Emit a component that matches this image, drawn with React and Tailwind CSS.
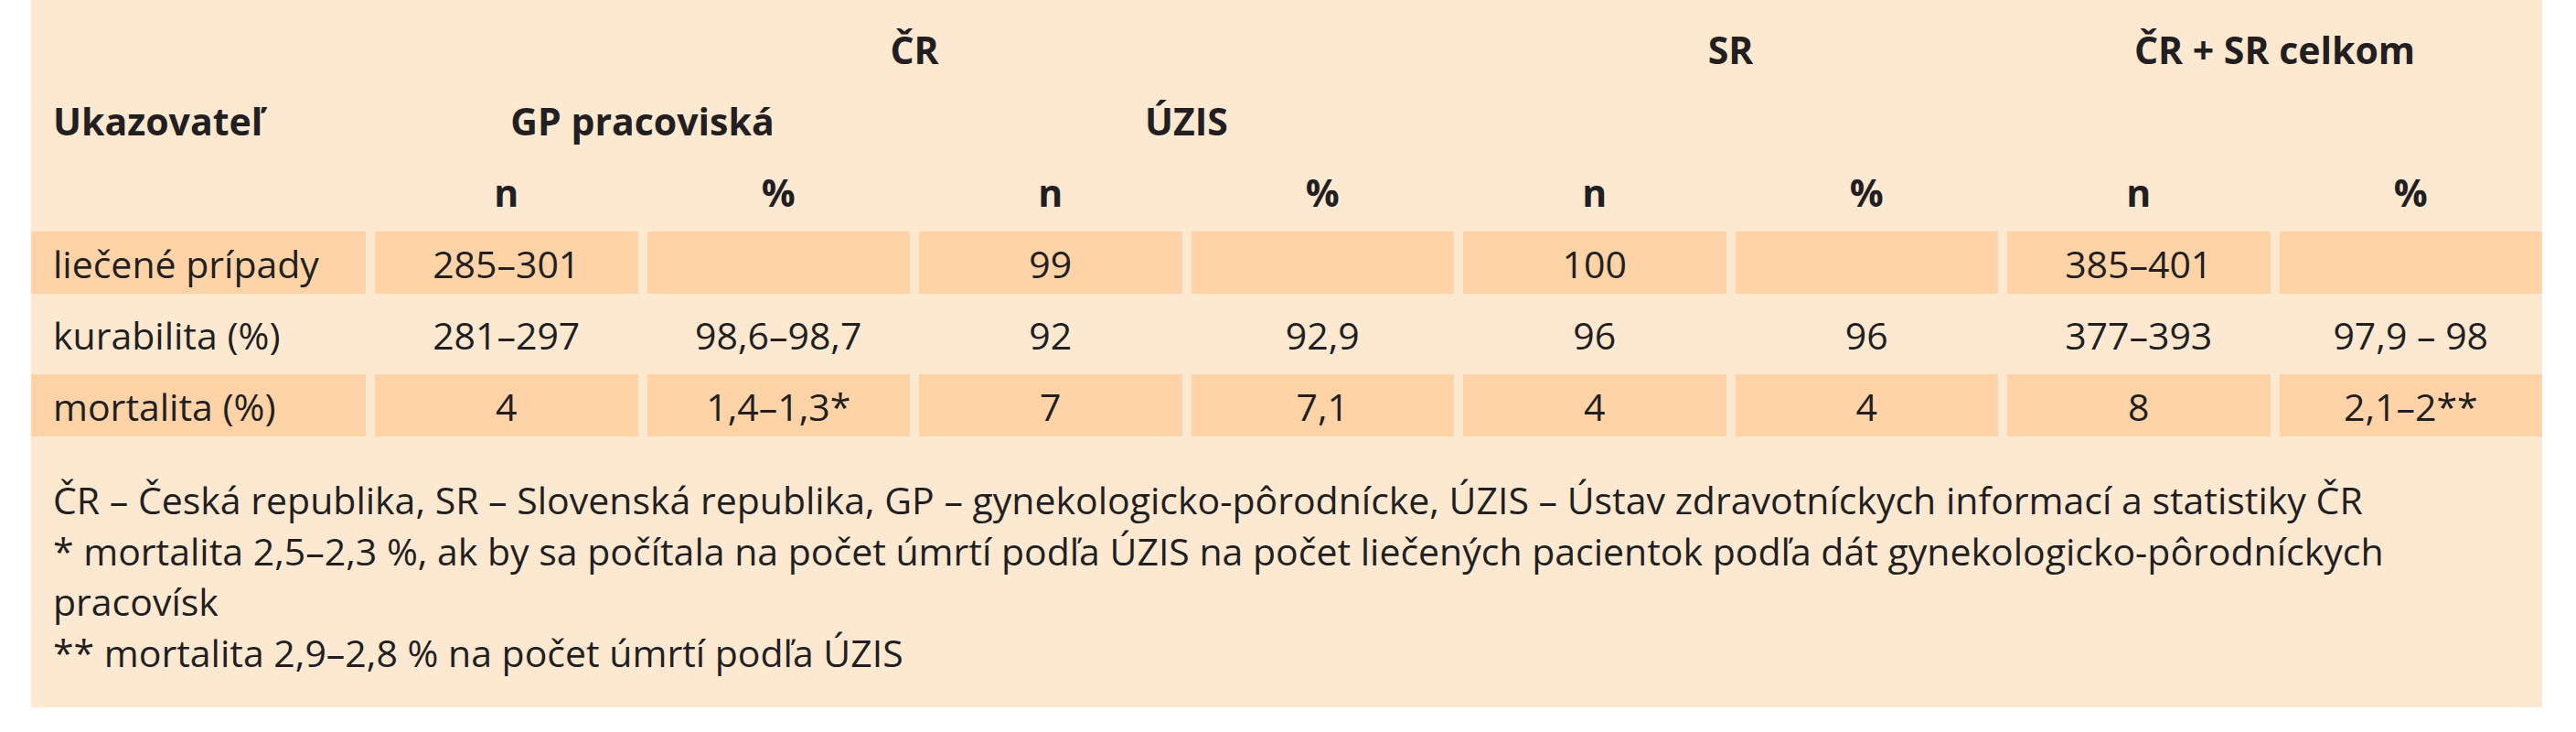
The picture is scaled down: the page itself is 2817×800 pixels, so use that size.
import React from "react";

const rows = [
  { label: "liečené prípady", values: ["285–301", "", "99", "", "100", "", "385–401", ""], shaded: true },
  { label: "kurabilita (%)", values: ["281–297", "98,6–98,7", "92", "92,9", "96", "96", "377–393", "97,9 – 98"], shaded: false },
  { label: "mortalita (%)", values: ["4", "1,4–1,3*", "7", "7,1", "4", "4", "8", "2,1–2**"], shaded: true },
];

const notes = [
  "ČR – Česká republika, SR – Slovenská republika, GP – gynekologicko-pôrodnícke, ÚZIS – Ústav zdravotníckych informací a statistiky ČR",
  "* mortalita 2,5–2,3 %, ak by sa počítala na počet úmrtí podľa ÚZIS na počet liečených pacientok podľa dát gynekologicko-pôrodníckych",
  "pracovísk",
  "** mortalita 2,9–2,8 % na počet úmrtí podľa ÚZIS",
];

export default function App() {
  return (
    <div className="w-[2817px] h-[800px] bg-white text-[#231f20]" style={{ fontFamily: "'Open Sans', Lato, sans-serif" }}>
      <div className="ml-[34px] w-[2746px] bg-[#fde8d2] pt-[19px] pb-[32px]">
        <div className="grid grid-cols-[366px_repeat(8,1fr)] gap-[10px] text-[41px]">
          {/* header row 1 */}
          <div className="h-[68px]" />
          <div className="col-span-4 h-[68px] flex items-center justify-center pt-[3px] font-bold">ČR</div>
          <div className="col-span-2 h-[68px] flex items-center justify-center pt-[3px] font-bold">SR</div>
          <div className="col-span-2 h-[68px] flex items-center justify-center pt-[3px] font-bold">ČR + SR celkom</div>

          {/* header row 2 */}
          <div className="h-[68px] flex items-center pl-[24px] pt-[3px] font-bold">Ukazovateľ</div>
          <div className="col-span-2 h-[68px] flex items-center justify-center pt-[3px] font-bold">GP pracoviská</div>
          <div className="col-span-2 h-[68px] flex items-center justify-center pt-[3px] font-bold">ÚZIS</div>
          <div className="col-span-4 h-[68px]" />

          {/* header row 3 */}
          <div className="h-[68px]" />
          {["n", "%", "n", "%", "n", "%", "n", "%"].map((h, i) => (
            <div key={i} className="h-[68px] flex items-center justify-center pt-[3px] font-bold">{h}</div>
          ))}

          {rows.map((r) => (
            <React.Fragment key={r.label}>
              <div className={`h-[68px] flex items-center pl-[24px] pt-[3px] whitespace-nowrap ${r.shaded ? "bg-[#fdd3a7]" : ""}`}>{r.label}</div>
              {r.values.map((v, i) => (
                <div key={i} className={`h-[68px] flex items-center justify-center pt-[3px] whitespace-nowrap ${r.shaded ? "bg-[#fdd3a7]" : ""}`}>{v}</div>
              ))}
            </React.Fragment>
          ))}
        </div>

        <div className="mt-[42px] pl-[24px] text-[41px] leading-[55.5px]">
          {notes.map((n) => (
            <div key={n} className="whitespace-nowrap">{n}</div>
          ))}
        </div>
      </div>
    </div>
  );
}
